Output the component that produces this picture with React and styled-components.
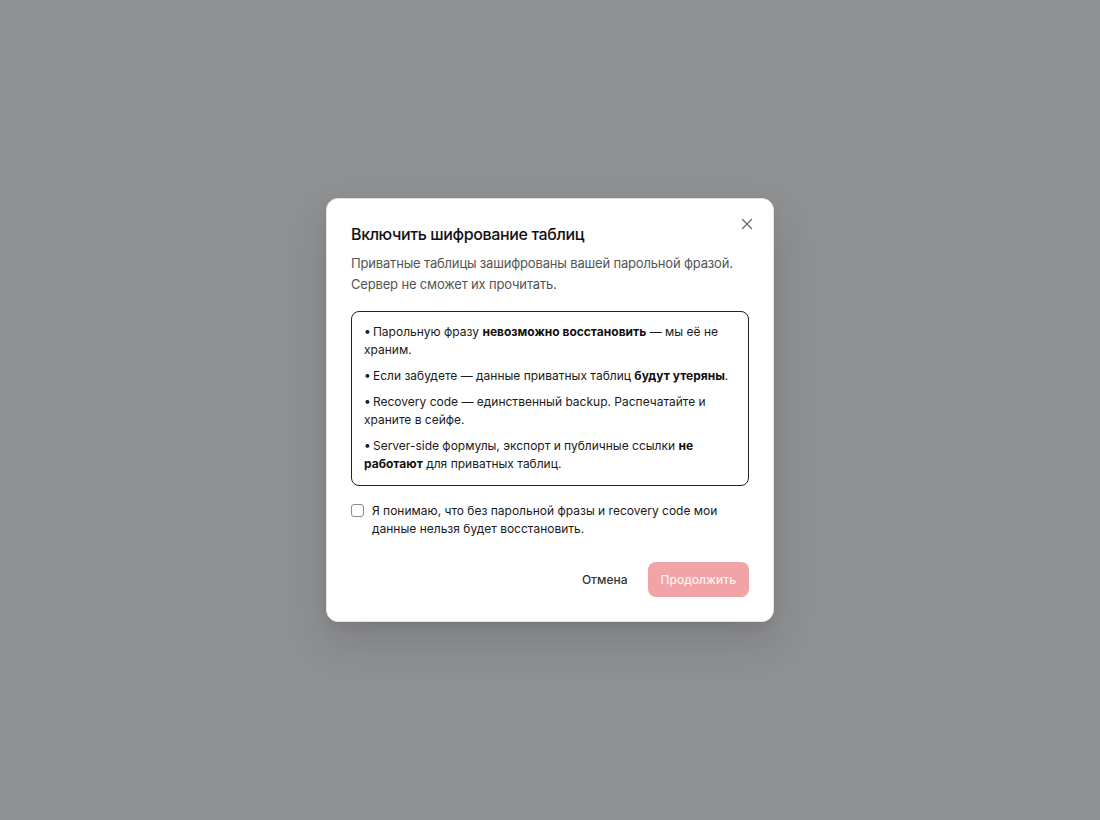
import React, { useState } from "react";
import styled, { createGlobalStyle } from "styled-components";

const Global = createGlobalStyle`
  html, body { margin: 0; padding: 0; }
  body { font-family: Inter, "Noto Sans", sans-serif; background: #8f9092; }
  * { box-sizing: border-box; }
`;

const Overlay = styled.div`
  width: 1100px;
  height: 820px;
  background: #8f9092;
  display: flex;
  align-items: center;
  justify-content: center;
`;

const Dialog = styled.div`
  position: relative;
  width: 448px;
  background: #fff;
  border-radius: 12px;
  border: 1px solid #e4e4e7;
  box-shadow: 0 20px 40px rgba(0, 0, 0, 0.12), 0 4px 10px rgba(0, 0, 0, 0.06);
  padding: 24px;
  display: flex;
  flex-direction: column;
`;

const Close = styled.button`
  position: absolute;
  top: 17px;
  right: 18px;
  width: 16px;
  height: 16px;
  padding: 0;
  border: none;
  background: transparent;
  color: #6b6b6b;
  display: flex;
  align-items: center;
  justify-content: center;
  cursor: pointer;
`;

const Title = styled.h2`
  margin: 0;
  font-size: 16px;
  font-weight: 500;
  line-height: 22px;
  color: #111;
  letter-spacing: -0.38px;
`;

const Desc = styled.p`
  margin: 8px 0 0;
  font-size: 13px;
  line-height: 21px;
  color: #555;
  letter-spacing: -0.17px;
`;

const WarnBox = styled.div`
  margin-top: 16px;
  border: 1px solid #222;
  border-radius: 8px;
  padding: 11px 12px 12px;
  display: flex;
  flex-direction: column;
  gap: 8px;
`;

const Item = styled.p`
  margin: 0;
  font-size: 12px;
  line-height: 18px;
  color: #1a1a1a;
  b { font-weight: 700; color: #111; }
`;

const CheckRow = styled.label`
  margin-top: 16px;
  display: flex;
  align-items: flex-start;
  gap: 8px;
  font-size: 12px;
  line-height: 18px;
  color: #1a1a1a;
  cursor: pointer;
`;

const Box = styled.span`
  flex: none;
  width: 13px;
  height: 13px;
  margin-top: 2px;
  border: 1px solid #8a8a8a;
  border-radius: 3px;
  background: ${(p) => (p.$checked ? "#111" : "#fff")};
`;

const Footer = styled.div`
  margin-top: 24px;
  display: flex;
  justify-content: flex-end;
  align-items: center;
  gap: 4px;
`;

const Btn = styled.button`
  height: 35px;
  padding: 0 ${(p) => (p.$primary ? "13px" : "16px")};
  border-radius: 8px;
  border: none;
  font-family: inherit;
  font-size: 12px;
  font-weight: 500;
  cursor: pointer;
  background: ${(p) => (p.$primary ? "#f2a3a5" : "transparent")};
  color: ${(p) => (p.$primary ? "#fdf3f3" : "#333")};
`;

export default function App() {
  const [checked, setChecked] = useState(false);
  const dot = "•\u2009";
  return (
    <>
      <Global />
      <Overlay>
        <Dialog>
          <Close aria-label="Закрыть">
            <svg width="12" height="12" viewBox="0 0 12 12" fill="none" stroke="currentColor" strokeWidth="1.3" strokeLinecap="round">
              <path d="M1.5 1.5l9 9M10.5 1.5l-9 9" />
            </svg>
          </Close>
          <Title>Включить шифрование таблиц</Title>
          <Desc>
            Приватные таблицы зашифрованы вашей парольной фразой. Сервер не сможет их прочитать.
          </Desc>
          <WarnBox>
            <Item>
              {dot}Парольную фразу <b>невозможно восстановить</b> — мы её не храним.
            </Item>
            <Item>
              {dot}Если забудете — данные приватных таблиц <b>будут утеряны</b>.
            </Item>
            <Item>
              {dot}Recovery code — единственный backup. Распечатайте и храните в сейфе.
            </Item>
            <Item>
              {dot}Server-side формулы, экспорт и публичные ссылки <b>не работают</b> для приватных таблиц.
            </Item>
          </WarnBox>
          <CheckRow onClick={() => setChecked(!checked)}>
            <Box $checked={checked} />
            <span>
              Я понимаю, что без парольной фразы и recovery code мои данные нельзя будет восстановить.
            </span>
          </CheckRow>
          <Footer>
            <Btn>Отмена</Btn>
            <Btn $primary disabled={!checked}>Продолжить</Btn>
          </Footer>
        </Dialog>
      </Overlay>
    </>
  );
}
